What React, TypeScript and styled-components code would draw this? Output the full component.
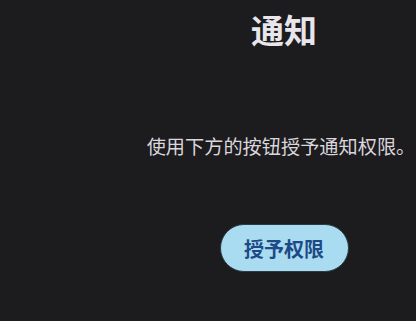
import styled, { createGlobalStyle } from 'styled-components';

const GlobalStyle = createGlobalStyle`
  html, body {
    margin: 0;
    padding: 0;
    background: #1c1b1e;
  }
  body {
    font-family: "Noto Sans CJK SC", "Noto Sans", sans-serif;
  }
`;

const Screen = styled.div`
  width: 416px;
  height: 321px;
  background: #1c1b1e;
  overflow: hidden;
  display: flex;
  padding-left: 146px;
  box-sizing: border-box;
`;

const Column = styled.div`
  width: 270px;
  display: flex;
  flex-direction: column;
  align-items: center;
  padding-top: 9px;
`;

const Title = styled.h1`
  margin: 0 0 0 6px;
  font-size: 33px;
  line-height: 40px;
  font-weight: 700;
  color: #e8e6ea;
`;

const Body = styled.p`
  margin: 84px 0 0;
  font-size: 19.2px;
  line-height: 26px;
  color: #d9d6dc;
  white-space: nowrap;
`;

const GrantButton = styled.button`
  margin: 65px 0 0 6px;
  width: 129px;
  height: 48px;
  border-radius: 24px;
  border: 1.5px solid #2b3a44;
  background: #a9dcf1;
  color: #1d4a86;
  font-family: inherit;
  font-size: 20px;
  font-weight: 700;
  cursor: pointer;
`;

export default function App() {
  return (
    <>
      <GlobalStyle />
      <Screen>
        <Column>
          <Title>通知</Title>
          <Body>使用下方的按钮授予通知权限。</Body>
          <GrantButton>授予权限</GrantButton>
        </Column>
      </Screen>
    </>
  );
}
